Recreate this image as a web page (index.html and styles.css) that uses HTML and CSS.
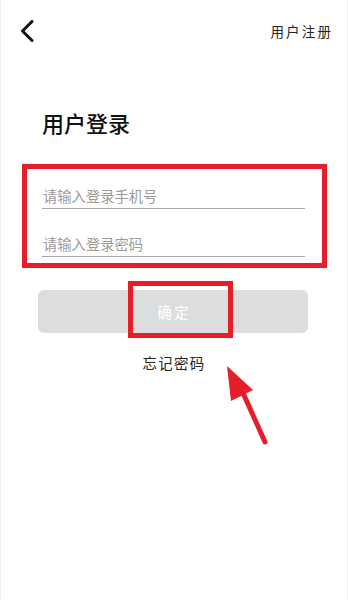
FILE: index.html
```html
<!DOCTYPE html>
<html lang="zh-CN">
<head>
<meta charset="utf-8">
<title>用户登录</title>
<link rel="stylesheet" href="styles.css">
</head>
<body>
<div class="page">
  <header class="topbar">
    <svg class="back" width="14" height="22" viewBox="0 0 14 22" aria-hidden="true">
      <polyline points="12,1.5 2.5,11 12,20.5" fill="none" stroke="#111" stroke-width="3" stroke-linecap="round" stroke-linejoin="round"/>
    </svg>
    <a class="register">用户注册</a>
  </header>

  <h1 class="title">用户登录</h1>

  <div class="form-box">
    <input class="field" type="text" placeholder="请输入登录手机号">
    <input class="field" type="password" placeholder="请输入登录密码">
  </div>

  <div class="btn-wrap">
    <button class="submit">确定</button>
    <div class="mark"></div>
  </div>

  <div class="forgot">忘记密码</div>

  <svg class="arrow" width="348" height="600" viewBox="0 0 348 600" aria-hidden="true">
    <line x1="243" y1="393" x2="265" y2="442" stroke="#e61e2a" stroke-width="5" stroke-linecap="round"/>
    <polygon points="227,366 231,401 253,390" fill="#e61e2a"/>
  </svg>
</div>
</body>
</html>
```
FILE: styles.css
```css
* { box-sizing: border-box; }
html, body { margin: 0; padding: 0; background: #fff; }
body {
  font-family: "Noto Sans CJK SC", "Noto Sans", sans-serif;
  color: #111;
}
.page {
  position: relative;
  width: 348px;
  height: 600px;
  border-left: 1px solid #ececec;
  border-right: 1px solid #ececec;
  overflow: hidden;
}
.topbar {
  display: flex;
  justify-content: space-between;
  align-items: center;
  height: 24px;
  margin-top: 19px;
  padding: 0 16px 0 19px;
}
.back { display: block; }
.register {
  font-size: 13.5px;
  line-height: 24px;
  letter-spacing: 2.2px;
  margin-right: -2.2px;
  color: #222;
}
.title {
  margin: 64px 0 0 41px;
  font-size: 22px;
  line-height: 30px;
  font-weight: 500;
  color: #111;
}
.form-box {
  margin: 27px 20px 0 21px;
  border: 5.5px solid #e61e2a;
  padding: 14.5px 17px 6.5px 15px;
  display: flex;
  flex-direction: column;
  gap: 23px;
}
.field {
  display: block;
  width: 100%;
  height: 25px;
  border: none;
  border-bottom: 1.5px solid #a9a9a9;
  padding: 0 0 1px 1px;
  margin: 0;
  font-family: inherit;
  font-size: 14.3px;
  background: transparent;
  outline: none;
  color: #222;
}
.field::placeholder { color: #9b9b9b; }
.btn-wrap {
  position: relative;
  margin: 22px 39px 0 37px;
}
.submit {
  display: block;
  width: 100%;
  height: 43px;
  border: none;
  border-radius: 6px;
  background: #dcdddf;
  color: #fff;
  font-family: inherit;
  font-size: 14.5px;
  letter-spacing: 2.5px;
  padding: 0 0 0 2.5px;
}
.mark {
  position: absolute;
  left: 90px;
  top: -9px;
  width: 105px;
  height: 57px;
  border: 5px solid #e61e2a;
}
.forgot {
  margin-top: 19.5px;
  text-align: center;
  font-size: 14.5px;
  line-height: 20px;
  letter-spacing: 1.2px;
  color: #222;
}
.arrow {
  position: absolute;
  left: -1px;
  top: 0;
  pointer-events: none;
}
```
